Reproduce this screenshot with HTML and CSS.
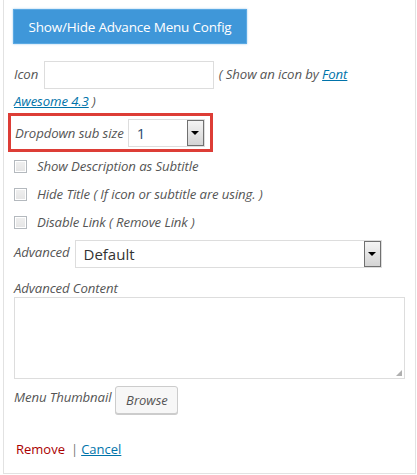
FILE: index.html
```html
<!DOCTYPE html>
<html>
<head>
<meta charset="utf-8">
<link rel="stylesheet" href="styles.css">
</head>
<body>
<div class="panel">
  <div class="toggle-wrap"><button class="toggle">Show/Hide Advance Menu Config</button></div>
  <p class="icon-row">Icon <span class="text-input"></span> ( Show an icon by <a class="link" href="#">Font</a> <a class="link" href="#">Awesome 4.3</a> )</p>
  <div class="dropdown-box">
    <span class="lbl">Dropdown sub size</span>
    <div class="select small"><span class="val">1</span><span class="arrow"><i></i></span></div>
  </div>
  <div class="check-row"><span class="cb"></span><span class="lbl">Show Description as Subtitle</span></div>
  <div class="check-row"><span class="cb"></span><span class="lbl">Hide Title ( If icon or subtitle are using. )</span></div>
  <div class="check-row"><span class="cb"></span><span class="lbl">Disable Link ( Remove Link )</span></div>
  <div class="adv-row">
    <span class="lbl">Advanced</span>
    <div class="select wide"><span class="val">Default</span><span class="arrow"><i></i></span></div>
  </div>
  <div class="content-lbl lbl">Advanced Content</div>
  <div class="textarea"><span class="grip"></span></div>
  <div class="thumb-row"><span class="lbl">Menu Thumbnail</span><span class="browse">Browse</span></div>
  <div class="actions"><a class="remove" href="#">Remove</a><span class="sep">|</span><a class="cancel" href="#">Cancel</a></div>
</div>
</body>
</html>
```
FILE: styles.css
```css
html, body { margin: 0; padding: 0; background: #fff; }
body { font-family: "Open Sans", "Noto Sans", sans-serif; color: #444; }
.panel {
  margin-left: 3px;
  width: 413px;
  height: 474px;
  border: 1px solid #e2e2e2;
  border-top: none;
  box-sizing: border-box;
  position: relative;
}
.toggle-wrap { padding: 9px 0 0 9px; }
.toggle {
  display: block;
  width: 234px; height: 35px;
  background: #3f97d9;
  border: 1px solid #5aa9e3;
  box-shadow: 0 0 2px rgba(64,150,216,0.5);
  color: #fff;
  font-family: "Open Sans", sans-serif;
  font-size: 13.5px;
  letter-spacing: -0.2px;
  padding: 0;
}
.lbl { font-style: italic; font-size: 13.2px; color: #555; letter-spacing: -0.1px; }
.icon-row {
  margin: 17px 0 0 10px; width: 370px;
  line-height: 25px; font-size: 13.2px;
  font-style: italic; color: #555; letter-spacing: -0.1px;
}
.text-input {
  display: inline-block; vertical-align: middle;
  width: 170px; height: 28px;
  border: 1px solid #ddd; box-sizing: border-box;
  margin: 0 2px;
}
.link { color: #0073aa; text-decoration: underline; }
.dropdown-box {
  margin: -1px 0 0 4px;
  width: 205px; height: 39px;
  border: 3px solid #dd3d36;
  box-sizing: border-box;
  display: flex; align-items: center;
  padding-left: 4px;
  gap: 4px;
}
.select {
  display: flex; align-items: center;
  height: 28px; box-sizing: border-box;
  border: 1px solid #ddd; background: #fff;
  padding-left: 8px;
}
.select .val { flex: 1; font-size: 15px; color: #333; }
.select.small { width: 77px; }
.select.small .val { color: #2a4c70; }
.select .arrow {
  width: 17px; height: 26px; box-sizing: border-box;
  border: 1px solid #707070;
  background: linear-gradient(#f4f4f4, #d4d4d4);
  display: flex; align-items: center; justify-content: center;
}
.select .arrow i {
  width: 0; height: 0;
  border-left: 4px solid transparent;
  border-right: 4px solid transparent;
  border-top: 4px solid #000;
}
.check-row { display: flex; align-items: center; height: 28px; margin-left: 10px; gap: 10px; }
.cb {
  width: 13px; height: 13px; box-sizing: border-box;
  border: 1px solid #b4b9be;
  background: linear-gradient(#f0f0f0, #e4e4e4);
  box-shadow: inset 0 0 0 1px #fff;
}
.adv-row { display: flex; align-items: center; margin: 4px 0 0 10px; gap: 5px; height: 28px; }
.adv-row .lbl { position: relative; top: -2px; }
.select.wide { width: 307px; }
.content-lbl { margin: 11px 0 0 10px; line-height: 18px; }
.textarea {
  margin: 0 0 0 10px;
  width: 391px; height: 82px;
  border: 1px solid #ddd; box-sizing: border-box;
  position: relative;
}
.grip {
  position: absolute; right: 2px; bottom: 2px;
  width: 6px; height: 6px;
  background:
    radial-gradient(circle, #aaa 0.7px, transparent 0.8px) 0 0 / 2px 2px;
  clip-path: polygon(100% 0, 100% 100%, 0 100%);
}
.thumb-row { display: flex; align-items: center; margin: 7px 0 0 10px; gap: 4px; }
.thumb-row .lbl { position: relative; top: -3px; }
.browse {
  display: inline-flex; align-items: center; justify-content: center;
  width: 63px; height: 28px; box-sizing: border-box;
  border: 1px solid #ccc; border-radius: 3px;
  background: #f7f7f7;
  box-shadow: 0 1px 0 #ccc;
  font-style: italic; font-size: 13px; color: #555;
}
.actions { margin: 26px 0 0 12px; font-size: 13px; display: flex; align-items: center; }
.remove { color: #a00; text-decoration: none; }
.sep { color: #777; margin: 0 3px 0 6px; }
.cancel { color: #0073aa; text-decoration: underline; }
```
